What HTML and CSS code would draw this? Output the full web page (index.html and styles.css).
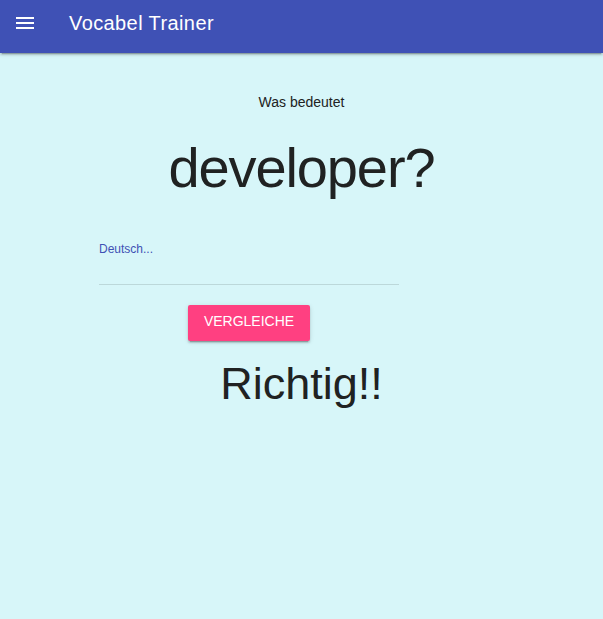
FILE: index.html
```html
<!DOCTYPE html>
<html lang="de">
<head>
<meta charset="utf-8">
<meta name="viewport" content="width=device-width, initial-scale=1">
<title>Vocabel Trainer</title>
<link rel="stylesheet" href="styles.css">
</head>
<body>
<header class="bar">
  <button class="menu" type="button" aria-label="Menu">
    <svg viewBox="0 0 24 24" width="24" height="24" fill="currentColor" aria-hidden="true"><path d="M3 18h18v-2H3v2zm0-5h18v-2H3v2zm0-7v2h18V6H3z"/></svg>
  </button>
  <span class="title">Vocabel Trainer</span>
</header>
<main class="content">
  <p class="prompt">Was bedeutet</p>
  <h1 class="word">developer?</h1>
  <form class="answer">
    <div class="field">
      <label class="label" for="german">Deutsch...</label>
      <input class="input" id="german" type="text" autocomplete="off">
    </div>
    <button class="compare" type="button">Vergleiche</button>
  </form>
  <h2 class="result">Richtig!!</h2>
</main>
</body>
</html>
```
FILE: styles.css
```css
* {
  box-sizing: border-box;
}

body {
  margin: 0;
  min-height: 100vh;
  background: #d7f6f9;
  color: #202222;
  font-family: "Liberation Sans", Arial, sans-serif;
  font-size: 14px;
  line-height: 20px;
}

.bar {
  display: flex;
  align-items: flex-start;
  gap: 32px;
  padding: 11px 13px 18px;
  background: #3f51b5;
  color: #fff;
  box-shadow: 0 2px 2px rgba(0, 0, 0, .14), 0 3px 1px -2px rgba(0, 0, 0, .2), 0 1px 5px rgba(0, 0, 0, .12);
}

.menu {
  display: block;
  padding: 0;
  border: 0;
  background: none;
  color: inherit;
}

.menu svg {
  display: block;
}

.title {
  font-size: 20px;
  line-height: 24px;
  letter-spacing: .02em;
}

.content {
  text-align: center;
}

.prompt {
  margin: 39px 0 0;
}

.word {
  margin: 28px 0 0;
  font-size: 56px;
  line-height: 56px;
  font-weight: 400;
  letter-spacing: -.02em;
}

.answer {
  display: flex;
  flex-direction: column;
  align-items: center;
  width: 300px;
  margin: 45px 0 0 99px;
}

.field {
  width: 100%;
  text-align: left;
}

.label {
  display: block;
  color: #3f51b5;
  font-size: 12px;
  line-height: 16px;
}

.input {
  display: block;
  width: 100%;
  height: 28px;
  padding: 4px 0;
  border: 0;
  border-bottom: 1px solid rgba(0, 0, 0, .12);
  background: none;
  font: 16px "Liberation Sans", Arial, sans-serif;
}

.compare {
  height: 36px;
  margin-top: 20px;
  padding: 0 16px 4px;
  border: 0;
  border-radius: 2px;
  background: #ff4081;
  color: #fff;
  font: 14px "Liberation Sans", Arial, sans-serif;
  text-transform: uppercase;
  box-shadow: 0 2px 2px rgba(0, 0, 0, .14), 0 3px 1px -2px rgba(0, 0, 0, .2), 0 1px 5px rgba(0, 0, 0, .12);
}

.result {
  margin: 19px 0 0;
  font-size: 45px;
  line-height: 48px;
  font-weight: 400;
}
```
